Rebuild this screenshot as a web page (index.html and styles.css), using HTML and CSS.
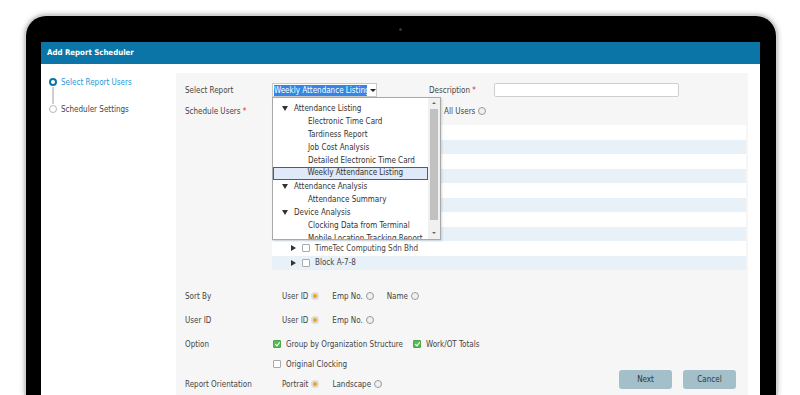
FILE: index.html
```html
<!DOCTYPE html>
<html>
<head>
    <link rel="stylesheet" href="styles.css">
</head>
<body>
    <div class="laptop">
        <div class="bezel-top"><span class="camera"></span></div>
        <div class="screen">
            <div class="title-bar">Add Report Scheduler</div>
            <div class="content">
                <div class="steps">
                    <div class="step active"><span class="dot"></span>Select Report Users</div>
                    <div class="step-line"></div>
                    <div class="step"><span class="dot"></span>Scheduler Settings</div>
                </div>
                <div class="panel">
                    <div class="row first">
                        <div class="label">Select Report</div>
                        <div class="field">
                            <div class="select">
                                <span class="select-text">Weekly Attendance Listing</span>
                                <span class="caret"></span>
                                <div class="menu">
                                    <div class="menu-list">
                                        <div class="item group"><span class="tri-down"></span>Attendance Listing</div>
                                        <div class="item child">Electronic Time Card</div>
                                        <div class="item child">Tardiness Report</div>
                                        <div class="item child">Job Cost Analysis</div>
                                        <div class="item child">Detailed Electronic Time Card</div>
                                        <div class="item child picked">Weekly Attendance Listing</div>
                                        <div class="item group"><span class="tri-down"></span>Attendance Analysis</div>
                                        <div class="item child">Attendance Summary</div>
                                        <div class="item group"><span class="tri-down"></span>Device Analysis</div>
                                        <div class="item child">Clocking Data from Terminal</div>
                                        <div class="item child">Mobile Location Tracking Report</div>
                                    </div>
                                    <div class="scrollbar">
                                        <span class="arrow up"></span>
                                        <span class="thumb"></span>
                                        <span class="arrow down"></span>
                                    </div>
                                </div>
                            </div>
                            <span class="desc-label">Description <span class="req">*</span></span>
                            <span class="input"></span>
                        </div>
                    </div>
                    <div class="row">
                        <div class="label">Schedule Users <span class="req">*</span></div>
                        <div class="field">
                            <span class="all-users">All Users <span class="radio"></span></span>
                        </div>
                    </div>
                    <div class="tree">
                        <div class="tree-row"></div>
                        <div class="tree-row"></div>
                        <div class="tree-row"></div>
                        <div class="tree-row"></div>
                        <div class="tree-row"></div>
                        <div class="tree-row"></div>
                        <div class="tree-row"></div>
                        <div class="tree-row"></div>
                        <div class="tree-row"><span class="tri-right"></span><span class="check"></span>TimeTec Computing Sdn Bhd</div>
                        <div class="tree-row"><span class="tri-right"></span><span class="check"></span>Block A-7-8</div>
                    </div>
                    <div class="row sort">
                        <div class="label">Sort By</div>
                        <div class="field">
                            <span class="opt">User ID <span class="radio on"></span></span>
                            <span class="opt">Emp No. <span class="radio"></span></span>
                            <span class="opt">Name <span class="radio"></span></span>
                        </div>
                    </div>
                    <div class="row">
                        <div class="label">User ID</div>
                        <div class="field">
                            <span class="opt">User ID <span class="radio on"></span></span>
                            <span class="opt">Emp No. <span class="radio"></span></span>
                        </div>
                    </div>
                    <div class="footer">
                        <div class="footer-rows">
                            <div class="row">
                                <div class="label">Option</div>
                                <div class="field">
                                    <span class="tick"><span class="check on"></span>Group by Organization Structure</span>
                                    <span class="tick"><span class="check on"></span>Work/OT Totals</span>
                                </div>
                            </div>
                            <div class="row">
                                <div class="label"></div>
                                <div class="field">
                                    <span class="tick"><span class="check"></span>Original Clocking</span>
                                </div>
                            </div>
                            <div class="row">
                                <div class="label">Report Orientation</div>
                                <div class="field">
                                    <span class="opt">Portrait <span class="radio on"></span></span>
                                    <span class="opt">Landscape <span class="radio"></span></span>
                                </div>
                            </div>
                        </div>
                        <div class="buttons">
                            <span class="btn">Next</span>
                            <span class="btn">Cancel</span>
                        </div>
                    </div>
                </div>
            </div>
        </div>
    </div>
</body>
</html>
```

FILE: styles.css
```css
body {
    margin: 0;
    height: 395px;
    overflow: hidden;
    background-color: white;
    font-family: "DejaVu Sans", sans-serif;
    font-stretch: condensed;
    font-size: 8px;
    color: #444;
}
.laptop {
    margin: 14px 0 0 24px;
    width: 754px;
    height: 381px;
    box-sizing: border-box;
    background-color: black;
    border: 2px solid #d2d2d2;
    border-bottom: none;
    border-radius: 22px 22px 0 0;
    padding: 0 16px 0 15px;
    box-shadow: 0 0 5px rgba(0, 0, 0, 0.25);
}
.bezel-top {
    height: 26px;
    display: flex;
    align-items: center;
    justify-content: center;
}
.camera {
    width: 3px;
    height: 3px;
    border-radius: 50%;
    background-color: #333;
}
.screen {
    background-color: white;
    height: 353px;
    overflow: hidden;
}
.title-bar {
    height: 22px;
    line-height: 22px;
    padding-left: 6px;
    background-color: #0b75a8;
    color: white;
    font-weight: bold;
    font-size: 7.8px;
}
.content {
    display: flex;
}
.steps {
    width: 135px;
    padding: 13px 0 0 8px;
    box-sizing: border-box;
}
.step {
    height: 10px;
    display: flex;
    align-items: center;
    color: #444;
}
.step.active {
    color: #1d9ad6;
}
.dot {
    width: 8px;
    height: 8px;
    box-sizing: border-box;
    border-radius: 50%;
    border: 1.5px solid #b8b8b8;
    background-color: white;
    margin-right: 4px;
}
.step.active .dot {
    border: 2px solid #0b75a8;
}
.step-line {
    width: 2px;
    height: 17px;
    margin-left: 3px;
    background-color: #cfcfcf;
}
.panel {
    width: 572px;
    margin-top: 9px;
    padding: 10px 2px 0 9px;
    box-sizing: border-box;
    background-color: #f6f6f6;
    height: 330px;
}
.row {
    display: flex;
    align-items: center;
    height: 14px;
    margin-bottom: 7px;
}
.label {
    width: 87px;
    flex-shrink: 0;
}
.req {
    color: #e0262d;
}
.field {
    display: flex;
    align-items: center;
    height: 14px;
}
.select {
    position: relative;
    width: 105px;
    height: 14px;
    box-sizing: border-box;
    border: 1px solid #c9c9c9;
    background-color: white;
    display: flex;
    align-items: center;
    padding-left: 1px;
}
.select-text {
    width: 93px;
    overflow: hidden;
    white-space: nowrap;
    background-color: #3385e6;
    color: white;
    line-height: 11px;
}
.caret {
    margin-left: 3px;
    border-left: 3px solid transparent;
    border-right: 3px solid transparent;
    border-top: 3px solid #222;
}
.menu {
    position: absolute;
    top: 13px;
    left: -1px;
    width: 169px;
    height: 143px;
    box-sizing: border-box;
    border: 1px solid #a9a9a9;
    background-color: white;
    box-shadow: 1px 1px 2px rgba(0, 0, 0, 0.15);
    display: flex;
    z-index: 2;
}
.menu-list {
    flex: 1;
    overflow: hidden;
    padding-top: 4px;
}
.item {
    height: 13px;
    line-height: 13px;
    white-space: nowrap;
    color: #333;
    box-sizing: border-box;
}
.item.group {
    padding-left: 9px;
    display: flex;
    align-items: center;
}
.item.child {
    padding-left: 35px;
}
.item.picked {
    background-color: #dfe9f8;
    border: 1.5px solid #e0202a;
    line-height: 10px;
    padding-left: 33.5px;
}
.tri-down {
    border-left: 3px solid transparent;
    border-right: 3px solid transparent;
    border-top: 5px solid #333;
    margin-right: 6px;
}
.scrollbar {
    width: 12px;
    background-color: #f0f0f0;
    display: flex;
    flex-direction: column;
    align-items: center;
    padding: 4px 0;
    box-sizing: border-box;
}
.arrow {
    border-left: 2px solid transparent;
    border-right: 2px solid transparent;
}
.arrow.up {
    border-bottom: 2px solid #666;
}
.arrow.down {
    border-top: 2px solid #666;
}
.thumb {
    width: 8px;
    height: 111px;
    margin: 5px 0 12px;
    background-color: #c1c1c1;
}
.desc-label {
    margin-left: 52px;
    width: 65px;
}
.input {
    width: 185px;
    height: 14px;
    box-sizing: border-box;
    border: 1px solid #cfcfcf;
    border-radius: 2px;
    background-color: white;
}
.all-users {
    margin-left: 172px;
    display: flex;
    align-items: center;
}
.radio {
    display: inline-block;
    width: 8px;
    height: 8px;
    box-sizing: border-box;
    border-radius: 50%;
    border: 1px solid #9a9a9a;
    background-color: #f0f0f0;
    margin-left: 3px;
}
.radio.on {
    border: 2px solid #dcdcdc;
    background-color: #f5a31a;
}
.tree {
    margin-left: 87px;
    width: 474px;
}
.tree-row {
    height: 14.5px;
    background-color: white;
    display: flex;
    align-items: center;
    padding-left: 19px;
}
.tree-row:nth-child(even) {
    background-color: #e8f1f7;
}
.tri-right {
    border-top: 3px solid transparent;
    border-bottom: 3px solid transparent;
    border-left: 5px solid #333;
    margin-right: 6px;
}
.check {
    display: inline-block;
    width: 8px;
    height: 8px;
    box-sizing: border-box;
    border: 1px solid #aaa;
    background-color: white;
    border-radius: 1px;
    margin-right: 5px;
    position: relative;
}
.check.on {
    background-color: #5cb85c;
    border-color: #4aa64a;
}
.check.on::after {
    content: '';
    position: absolute;
    left: 2px;
    top: 0;
    width: 2px;
    height: 4px;
    border: solid white;
    border-width: 0 1.5px 1.5px 0;
    transform: rotate(40deg);
}
.row.sort {
    margin-top: 19px;
    margin-bottom: 10px;
}
.sort ~ .row {
    margin-bottom: 10px;
}
.opt {
    display: flex;
    align-items: center;
    margin-right: 13px;
}
.opt:first-child {
    margin-left: 10px;
}
.tick {
    display: flex;
    align-items: center;
    margin-left: 1px;
    margin-right: 9px;
}
.footer {
    display: flex;
    align-items: flex-end;
}
.footer-rows .row {
    margin-bottom: 6px;
}
.footer-rows .row:last-child {
    margin-bottom: 0;
}
.buttons {
    display: flex;
    gap: 11px;
    margin-left: auto;
    margin-right: 10px;
    margin-bottom: 2px;
}
.btn {
    width: 53px;
    height: 19px;
    line-height: 19px;
    text-align: center;
    background-color: #a2bfca;
    border-radius: 3px;
    color: #333;
}
```
